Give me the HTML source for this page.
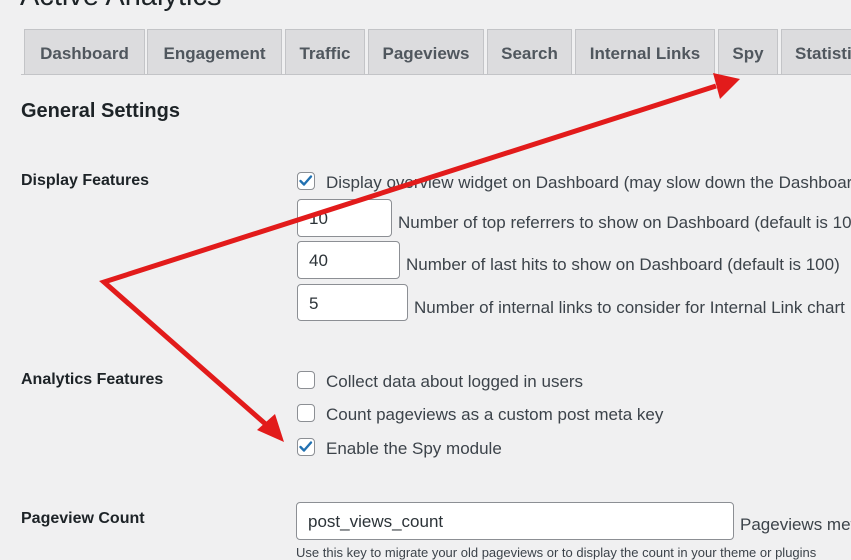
<!DOCTYPE html>
<html><head><meta charset="utf-8"><style>
body{margin:0;width:851px;height:556px;overflow:hidden;background:#f0f0f1;font-family:"Liberation Sans",sans-serif;color:#3c434a;position:relative}
.a{position:absolute;white-space:nowrap}
.tab{position:absolute;top:29px;height:45px;background:#dcdcde;border:1px solid #c3c4c7;border-bottom:none;box-sizing:border-box;font-size:17px;font-weight:bold;color:#50575e;text-align:center;line-height:48px}
.line{position:absolute;left:21px;right:0;top:74px;height:1px;background:#c3c4c7}
.lbl{font-size:16px;font-weight:bold;color:#1d2327}
.cb{position:absolute;width:18px;height:18px;border:1px solid #8c8f94;border-radius:4px;background:#fff;box-sizing:border-box}
.inp{position:absolute;border:1px solid #8c8f94;border-radius:4px;background:#fff;box-sizing:border-box;font-size:17px;color:#2c3338;padding-left:11px;line-height:38px}
.t{font-size:17px;color:#3c434a}
</style></head><body>
<div class="a" style="left:20px;top:-20px;font-size:29px;color:#1d2327">Active Analytics</div>
<div class="tab" style="left:24px;width:121px">Dashboard</div>
<div class="tab" style="left:147px;width:135px">Engagement</div>
<div class="tab" style="left:285px;width:80px">Traffic</div>
<div class="tab" style="left:368px;width:116px">Pageviews</div>
<div class="tab" style="left:487px;width:85px">Search</div>
<div class="tab" style="left:575px;width:140px">Internal Links</div>
<div class="tab" style="left:718px;width:60px">Spy</div>
<div class="tab" style="left:781px;width:90px;text-align:left;padding-left:13px">Statistics</div>
<div class="line"></div>
<div class="a lbl" style="left:21px;top:100px;font-size:20px">General Settings</div>
<div class="a lbl" style="left:21px;top:172px">Display Features</div>
<div class="a lbl" style="left:21px;top:371px">Analytics Features</div>
<div class="a lbl" style="left:21px;top:510px">Pageview Count</div>

<div class="cb" style="left:297px;top:172px"></div>
<div class="a t" style="left:326px;top:173px">Display overview widget on Dashboard (may slow down the Dashboard)</div>
<div class="inp" style="left:297px;top:199px;width:95px;height:38px">10</div>
<div class="a t" style="left:398px;top:213px">Number of top referrers to show on Dashboard (default is 10)</div>
<div class="inp" style="left:297px;top:241px;width:103px;height:38px">40</div>
<div class="a t" style="left:406px;top:255px">Number of last hits to show on Dashboard (default is 100)</div>
<div class="inp" style="left:297px;top:284px;width:111px;height:37px">5</div>
<div class="a t" style="left:414px;top:298px">Number of internal links to consider for Internal Link chart</div>

<div class="cb" style="left:297px;top:371px"></div>
<div class="a t" style="left:326px;top:372px">Collect data about logged in users</div>
<div class="cb" style="left:297px;top:404px"></div>
<div class="a t" style="left:326px;top:405px">Count pageviews as a custom post meta key</div>
<div class="cb" style="left:297px;top:438px"></div>
<div class="a t" style="left:326px;top:439px">Enable the Spy module</div>

<div class="inp" style="left:296px;top:502px;width:438px;height:38px">post_views_count</div>
<div class="a t" style="left:740px;top:515px">Pageviews meta key</div>
<div class="a" style="left:296px;top:545px;font-size:13px;color:#3c434a">Use this key to migrate your old pageviews or to display the count in your theme or plugins</div>

<svg class="a" style="left:0;top:0" width="851" height="556">
<g fill="none" stroke="#2271b1" stroke-width="2.4" stroke-linecap="round" stroke-linejoin="round">
<path d="M300.5 181l3.5 3.5 7-8"/>
<path d="M300.5 447l3.5 3.5 7-8"/>
</g>
<path d="M716 86 L104 282 L270 428" fill="none" stroke="#e21b1b" stroke-width="5" stroke-linejoin="miter"/>
<polygon points="740,79 713,73 720,99" fill="#e21b1b"/>
<polygon points="284,442 257,430 275,414" fill="#e21b1b"/>
</svg>
</body></html>
